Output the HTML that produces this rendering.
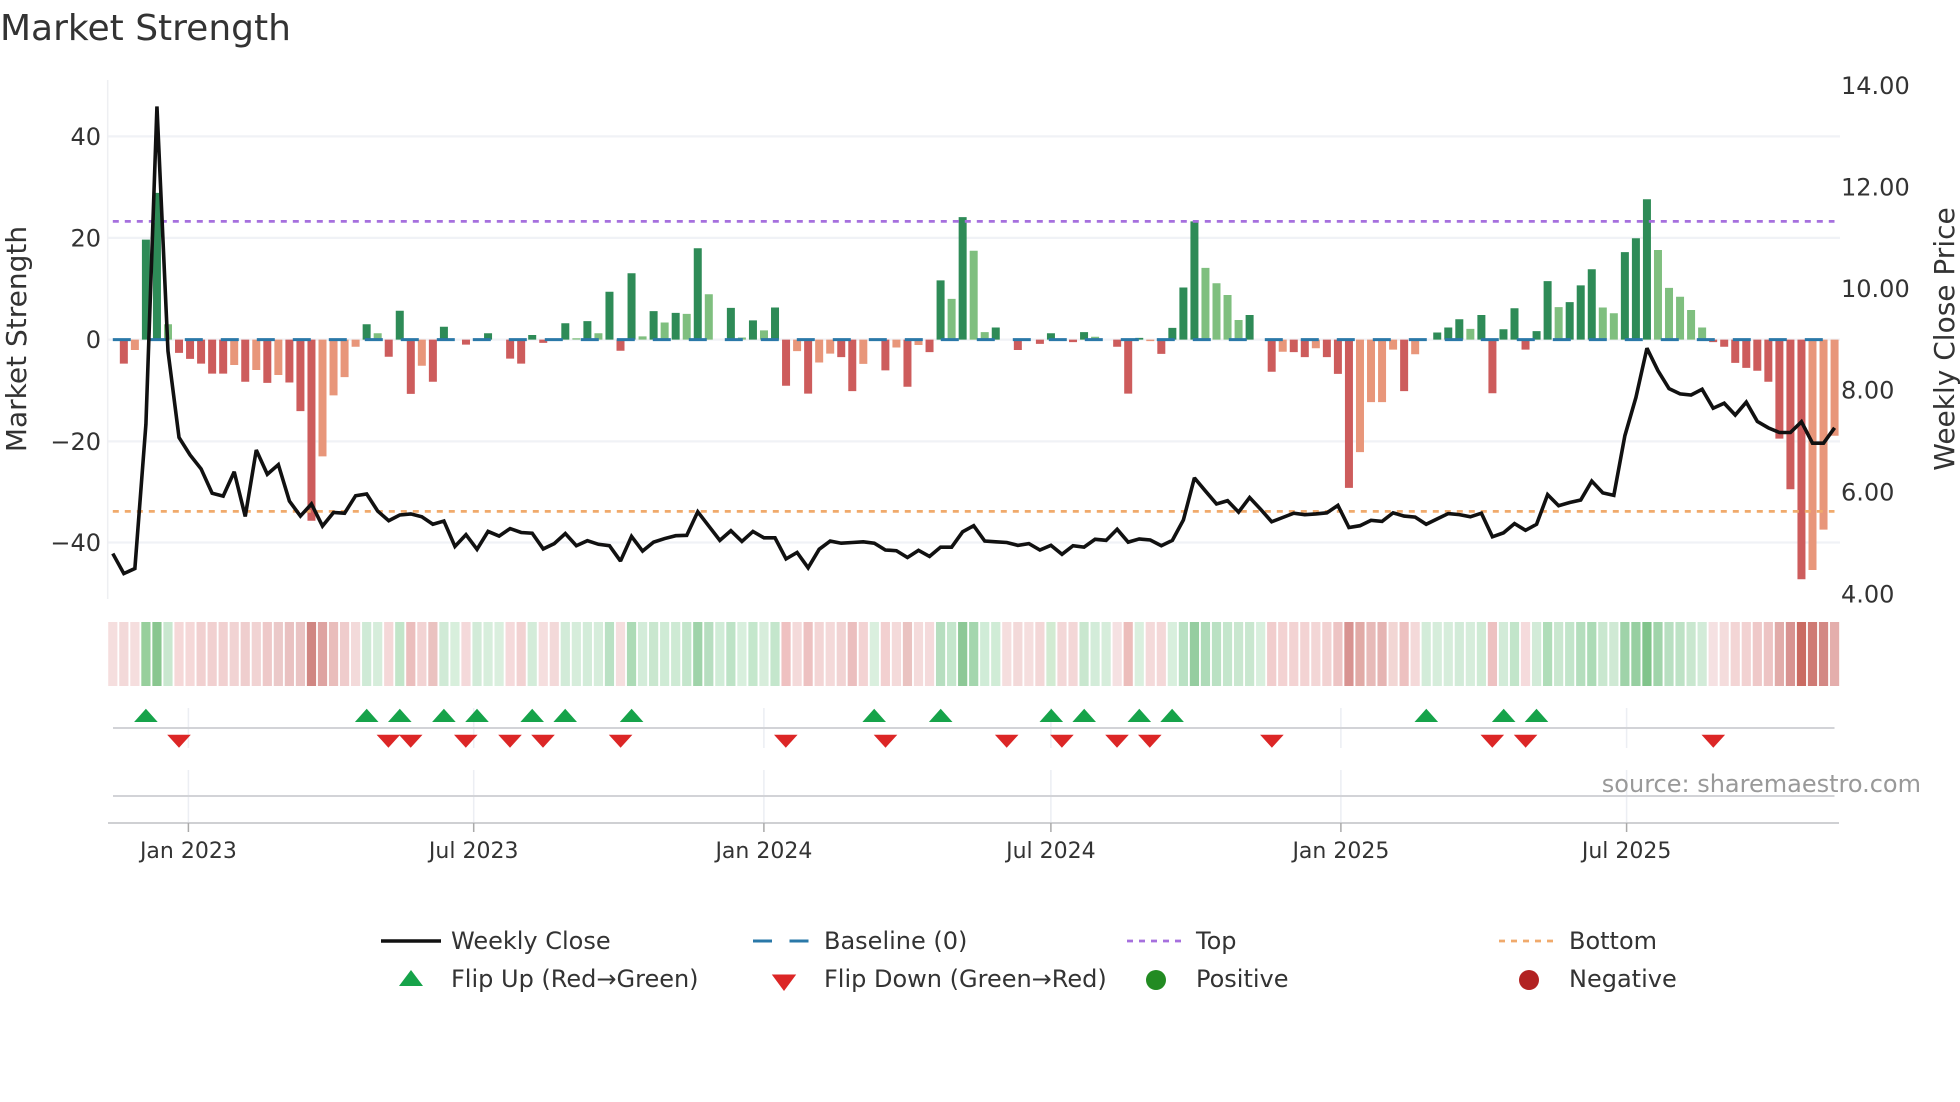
<!DOCTYPE html>
<html lang="en">
<head>
<meta charset="utf-8">
<title>Market Strength</title>
<style>
html,body{margin:0;padding:0;background:#fff;width:1960px;height:1102px;overflow:hidden}
svg{display:block}
text{font-family:"DejaVu Sans","Liberation Sans",sans-serif;fill:#333}
.u path,.h path{vector-effect:non-scaling-stroke;fill:none}
</style>
</head>
<body>
<svg width="1960" height="1102" viewBox="0 0 1960 1102" xmlns="http://www.w3.org/2000/svg">
<rect width="1960" height="1102" fill="#fff"/>

<text x="0" y="40" font-size="36">Market Strength</text>

<!-- grid -->
<g stroke="#f0f2f6" stroke-width="2.2">
<path d="M108 136.4H1840M108 237.9H1840M108 339.6H1840M108 441.4H1840M108 542.5H1840"/>
</g>
<path d="M107.7 80V599" stroke="#eeeff2" stroke-width="1.5"/>

<g font-size="24" text-anchor="end">
<text x="101" y="144.8">40</text>
<text x="101" y="246.3">20</text>
<text x="101" y="348">0</text>
<text x="101" y="449.8">−20</text>
<text x="101" y="550.9">−40</text>
</g>
<g font-size="24">
<text x="1841" y="94">14.00</text>
<text x="1841" y="195.5">12.00</text>
<text x="1841" y="297.1">10.00</text>
<text x="1841" y="398.7">8.00</text>
<text x="1841" y="500.3">6.00</text>
<text x="1841" y="602.300">4.00</text>
</g>
<text transform="translate(16 339) rotate(-90)" dy="10" font-size="28" text-anchor="middle">Market Strength</text>
<text transform="translate(1944 339) rotate(-90)" dy="10" font-size="28" text-anchor="middle">Weekly Close Price</text>

<!-- bars -->
<g class="u" transform="matrix(11.037 0 0 0.35714 112.8 60)" stroke-width="8">
<path stroke="#2e8b57" stroke-width="8" d="M3 783V503M4 783V372M23 783V740M26 783V702M30 783V747M34 783V765M38 783V770M41 783V737M43 783V731M45 783V649M47 783V597M49 783V703M51 783V708M53 783V527M56 783V694M58 783V729M60 783V693M75 783V617M77 783V440M80 783V749M85 783V765M88 783V762M93 783V778M96 783V750M97 783V637M98 783V452M103 783V714M120 783V763M121 783V749M122 783V726M124 783V714M126 783V754M127 783V695M129 783V759M130 783V619M132 783V678M133 783V631M134 783V586M137 783V538M138 783V499M139 783V390"/>
<path stroke="#7fbf7f" stroke-width="8" d="M5 783V740M24 783V765M42 783V779M44 783V765M48 783V774M50 783V735M52 783V711M54 783V656M57 783V777M59 783V757M76 783V669M78 783V534M79 783V762M89 783V775M99 783V582M100 783V625M101 783V658M102 783V728M123 783V753M131 783V692M135 783V693M136 783V709M140 783V532M141 783V638M142 783V663M143 783V700M144 783V749"/>
<path stroke="#cd5c5c" stroke-width="8" d="M1 783V850M6 783V820M7 783V837M8 783V850M9 783V878M10 783V878M12 783V901M14 783V904M16 783V903M17 783V983M18 783V1290M25 783V831M27 783V935M29 783V901M32 783V797M36 783V836M37 783V850M39 783V792M46 783V814M61 783V912M63 783V934M66 783V832M67 783V927M70 783V869M72 783V915M74 783V818M82 783V812M84 783V795M87 783V790M91 783V803M92 783V934M95 783V823M105 783V873M107 783V818M108 783V832M110 783V832M111 783V879M112 783V1198M117 783V927M125 783V933M128 783V811M145 783V790M146 783V803M147 783V848M148 783V862M149 783V870M150 783V901M151 783V1060M152 783V1202M153 783V1454"/>
<path stroke="#e8967a" stroke-width="8" d="M2 783V812M11 783V854M13 783V868M15 783V882M19 783V1110M20 783V939M21 783V888M22 783V803M28 783V856M62 783V815M64 783V847M65 783V822M68 783V851M71 783V805M73 783V798M94 783V787M106 783V817M109 783V807M113 783V1098M114 783V958M115 783V958M116 783V811M118 783V824M154 783V1428M155 783V1315M156 783V1052"/>
</g>

<!-- reference lines -->
<path d="M112.8 221.4H1834.500" stroke="#a670de" stroke-width="2.8" stroke-dasharray="6 6"/>
<path d="M112.8 511.4H1834.500" stroke="#f0aa6c" stroke-width="2.8" stroke-dasharray="6 6"/>
<path d="M112.8 339.6H1834.500" stroke="#2a78a8" stroke-width="3" stroke-dasharray="18 18"/>

<!-- weekly close -->
<g class="u" transform="matrix(11.037 0 0 0.35714 112.8 60)">
<path stroke="#111" stroke-width="3.6" stroke-linejoin="miter" stroke-miterlimit="2" d="M0 1382L1 1438L2 1424L3 1020L4 130L5 815L6 1057L7 1106L8 1145L9 1213L10 1221L11 1153L12 1278L13 1092L14 1160L15 1133L16 1235L17 1277L18 1243L19 1305L20 1267L21 1269L22 1220L23 1215L24 1263L25 1290L26 1274L27 1271L28 1279L29 1300L30 1291L31 1362L32 1329L33 1370L34 1320L35 1333L36 1312L37 1323L38 1325L39 1369L40 1354L41 1326L42 1360L43 1346L44 1356L45 1360L46 1403L47 1334L48 1375L49 1350L50 1340L51 1332L52 1331L53 1265L54 1305L55 1345L56 1318L57 1348L58 1320L59 1338L60 1338L61 1397L62 1379L63 1422L64 1370L65 1347L66 1353L67 1351L68 1349L69 1353L70 1372L71 1374L72 1393L73 1373L74 1390L75 1364L76 1364L77 1321L78 1304L79 1347L80 1349L81 1351L82 1359L83 1354L84 1372L85 1359L86 1384L87 1360L88 1364L89 1342L90 1345L91 1314L92 1350L93 1341L94 1344L95 1360L96 1345L97 1288L98 1170L99 1207L100 1243L101 1234L102 1266L103 1225L104 1258L105 1293L106 1281L107 1269L108 1273L109 1271L110 1268L111 1247L112 1309L113 1304L114 1289L115 1292L116 1268L117 1277L118 1280L119 1300L120 1285L121 1270L122 1273L123 1279L124 1269L125 1335L126 1324L127 1298L128 1317L129 1300L130 1217L131 1248L132 1239L133 1232L134 1179L135 1212L136 1219L137 1052L138 945L139 807L140 870L141 920L142 935L143 938L144 922L145 975L146 961L147 994L148 958L149 1012L150 1030L151 1043L152 1043L153 1013L154 1073L155 1073L156 1030"/>
</g>

<!-- heat strip -->
<g class="h" transform="matrix(11.037 0 0 64 112.8 622)" stroke-width="9.2" opacity="0.92">
<path stroke-width="9.2" stroke="#f5dcdc" d="M0 0V1"/><path stroke-width="9.2" stroke="#f3d6d6" d="M1 0V1"/><path stroke-width="9.2" stroke="#f5dcdc" d="M2 0V1"/><path stroke-width="9.2" stroke="#8fcb94" d="M3 0V1"/><path stroke-width="9.2" stroke="#7fc286" d="M4 0V1"/><path stroke-width="9.2" stroke="#c5e6cb" d="M5 0V1"/><path stroke-width="9.2" stroke="#f5d5d5" d="M6 0V1"/><path stroke-width="9.2" stroke="#f5d5d5" d="M7 0V1"/><path stroke-width="9.2" stroke="#f0cdcd" d="M8 0V1"/><path stroke-width="9.2" stroke="#f0cdcd" d="M9 0V1"/>
<path stroke-width="9.2" stroke="#f0cdcd" d="M10 0V1"/><path stroke-width="9.2" stroke="#f0d0d0" d="M11 0V1"/><path stroke-width="9.2" stroke="#eecaca" d="M12 0V1"/><path stroke-width="9.2" stroke="#f0d0d0" d="M13 0V1"/><path stroke-width="9.2" stroke="#edc5c5" d="M14 0V1"/><path stroke-width="9.2" stroke="#eac5c5" d="M15 0V1"/><path stroke-width="9.2" stroke="#e8bcbc" d="M16 0V1"/><path stroke-width="9.2" stroke="#e8bebe" d="M17 0V1"/><path stroke-width="9.2" stroke="#cd7c78" d="M18 0V1"/><path stroke-width="9.2" stroke="#dc9c9a" d="M19 0V1"/>
<path stroke-width="9.2" stroke="#e8b8b6" d="M20 0V1"/><path stroke-width="9.2" stroke="#eec8c8" d="M21 0V1"/><path stroke-width="9.2" stroke="#f3d7d7" d="M22 0V1"/><path stroke-width="9.2" stroke="#cce9d3" d="M23 0V1"/><path stroke-width="9.2" stroke="#d3ecd8" d="M24 0V1"/><path stroke-width="9.2" stroke="#f4d5d5" d="M25 0V1"/><path stroke-width="9.2" stroke="#bde3c5" d="M26 0V1"/><path stroke-width="9.2" stroke="#eab9b8" d="M27 0V1"/><path stroke-width="9.2" stroke="#f1d0d0" d="M28 0V1"/><path stroke-width="9.2" stroke="#e9bdbb" d="M29 0V1"/>
<path stroke-width="9.2" stroke="#cde9d3" d="M30 0V1"/><path stroke-width="9.2" stroke="#d5eeda" d="M31 0V1"/><path stroke-width="9.2" stroke="#f4d6d7" d="M32 0V1"/><path stroke-width="9.2" stroke="#cfead5" d="M33 0V1"/><path stroke-width="9.2" stroke="#d4edda" d="M34 0V1"/><path stroke-width="9.2" stroke="#d7eedc" d="M35 0V1"/><path stroke-width="9.2" stroke="#f5d7d8" d="M36 0V1"/><path stroke-width="9.2" stroke="#f1cfcf" d="M37 0V1"/><path stroke-width="9.2" stroke="#d0ebd6" d="M38 0V1"/><path stroke-width="9.2" stroke="#f5dcdc" d="M39 0V1"/>
<path stroke-width="9.2" stroke="#f3d6d6" d="M40 0V1"/><path stroke-width="9.2" stroke="#cfead5" d="M41 0V1"/><path stroke-width="9.2" stroke="#d3ecd9" d="M42 0V1"/><path stroke-width="9.2" stroke="#d0ebd6" d="M43 0V1"/><path stroke-width="9.2" stroke="#d3ecd9" d="M44 0V1"/><path stroke-width="9.2" stroke="#b5dfbf" d="M45 0V1"/><path stroke-width="9.2" stroke="#f5dcdc" d="M46 0V1"/><path stroke-width="9.2" stroke="#a5d8b0" d="M47 0V1"/><path stroke-width="9.2" stroke="#d0ebd6" d="M48 0V1"/><path stroke-width="9.2" stroke="#c5e6cc" d="M49 0V1"/>
<path stroke-width="9.2" stroke="#ccead2" d="M50 0V1"/><path stroke-width="9.2" stroke="#cae9d1" d="M51 0V1"/><path stroke-width="9.2" stroke="#c0e4c8" d="M52 0V1"/><path stroke-width="9.2" stroke="#97d0a2" d="M53 0V1"/><path stroke-width="9.2" stroke="#b1dcbb" d="M54 0V1"/><path stroke-width="9.2" stroke="#cdebd4" d="M55 0V1"/><path stroke-width="9.2" stroke="#b8e1c2" d="M56 0V1"/><path stroke-width="9.2" stroke="#d5eedb" d="M57 0V1"/><path stroke-width="9.2" stroke="#c0e5c8" d="M58 0V1"/><path stroke-width="9.2" stroke="#d4ecd9" d="M59 0V1"/>
<path stroke-width="9.2" stroke="#c0e4c8" d="M60 0V1"/><path stroke-width="9.2" stroke="#eebcbc" d="M61 0V1"/><path stroke-width="9.2" stroke="#f4d7d7" d="M62 0V1"/><path stroke-width="9.2" stroke="#ecbcbc" d="M63 0V1"/><path stroke-width="9.2" stroke="#f2d2d2" d="M64 0V1"/><path stroke-width="9.2" stroke="#f4d6d6" d="M65 0V1"/><path stroke-width="9.2" stroke="#f0d0d0" d="M66 0V1"/><path stroke-width="9.2" stroke="#eab9b9" d="M67 0V1"/><path stroke-width="9.2" stroke="#f2d0d0" d="M68 0V1"/><path stroke-width="9.2" stroke="#d7eedc" d="M69 0V1"/>
<path stroke-width="9.2" stroke="#f1cdcd" d="M70 0V1"/><path stroke-width="9.2" stroke="#f4d7d7" d="M71 0V1"/><path stroke-width="9.2" stroke="#e9bebc" d="M72 0V1"/><path stroke-width="9.2" stroke="#f4d9d9" d="M73 0V1"/><path stroke-width="9.2" stroke="#f4d7d9" d="M74 0V1"/><path stroke-width="9.2" stroke="#b0dcba" d="M75 0V1"/><path stroke-width="9.2" stroke="#c0e4c8" d="M76 0V1"/><path stroke-width="9.2" stroke="#84c48e" d="M77 0V1"/><path stroke-width="9.2" stroke="#9dd3a8" d="M78 0V1"/><path stroke-width="9.2" stroke="#cdebd4" d="M79 0V1"/>
<path stroke-width="9.2" stroke="#cdebd3" d="M80 0V1"/><path stroke-width="9.2" stroke="#f5dcdc" d="M81 0V1"/><path stroke-width="9.2" stroke="#f3d6d6" d="M82 0V1"/><path stroke-width="9.2" stroke="#f5dcdc" d="M83 0V1"/><path stroke-width="9.2" stroke="#f3d4d4" d="M84 0V1"/><path stroke-width="9.2" stroke="#cfeacf" d="M85 0V1"/><path stroke-width="9.2" stroke="#f3d4d4" d="M86 0V1"/><path stroke-width="9.2" stroke="#f3d4d4" d="M87 0V1"/><path stroke-width="9.2" stroke="#c5e6cc" d="M88 0V1"/><path stroke-width="9.2" stroke="#d0ebd6" d="M89 0V1"/>
<path stroke-width="9.2" stroke="#d3ecd9" d="M90 0V1"/><path stroke-width="9.2" stroke="#f5dfe0" d="M91 0V1"/><path stroke-width="9.2" stroke="#ebb8b6" d="M92 0V1"/><path stroke-width="9.2" stroke="#d7eedc" d="M93 0V1"/><path stroke-width="9.2" stroke="#f4d7d7" d="M94 0V1"/><path stroke-width="9.2" stroke="#f4d5d5" d="M95 0V1"/><path stroke-width="9.2" stroke="#d5eedb" d="M96 0V1"/><path stroke-width="9.2" stroke="#b4dfbe" d="M97 0V1"/><path stroke-width="9.2" stroke="#8dc998" d="M98 0V1"/><path stroke-width="9.2" stroke="#a8d9b3" d="M99 0V1"/>
<path stroke-width="9.2" stroke="#b5dfbe" d="M100 0V1"/><path stroke-width="9.2" stroke="#c0e4c8" d="M101 0V1"/><path stroke-width="9.2" stroke="#c5e6cc" d="M102 0V1"/><path stroke-width="9.2" stroke="#c5e6cc" d="M103 0V1"/><path stroke-width="9.2" stroke="#d5eedb" d="M104 0V1"/><path stroke-width="9.2" stroke="#f0c9c9" d="M105 0V1"/><path stroke-width="9.2" stroke="#f2cfcf" d="M106 0V1"/><path stroke-width="9.2" stroke="#f2d0d0" d="M107 0V1"/><path stroke-width="9.2" stroke="#f2d0d0" d="M108 0V1"/><path stroke-width="9.2" stroke="#f3d3d3" d="M109 0V1"/>
<path stroke-width="9.2" stroke="#f1cfcf" d="M110 0V1"/><path stroke-width="9.2" stroke="#ecc0c0" d="M111 0V1"/><path stroke-width="9.2" stroke="#d58a88" d="M112 0V1"/><path stroke-width="9.2" stroke="#dfa39f" d="M113 0V1"/><path stroke-width="9.2" stroke="#e6b5b3" d="M114 0V1"/><path stroke-width="9.2" stroke="#e3aeac" d="M115 0V1"/><path stroke-width="9.2" stroke="#f1d3d1" d="M116 0V1"/><path stroke-width="9.2" stroke="#ecbcbb" d="M117 0V1"/><path stroke-width="9.2" stroke="#f4d6d6" d="M118 0V1"/><path stroke-width="9.2" stroke="#d0ebd6" d="M119 0V1"/>
<path stroke-width="9.2" stroke="#d3ecd9" d="M120 0V1"/><path stroke-width="9.2" stroke="#d3ecd9" d="M121 0V1"/><path stroke-width="9.2" stroke="#cfead5" d="M122 0V1"/><path stroke-width="9.2" stroke="#d3ecd9" d="M123 0V1"/><path stroke-width="9.2" stroke="#ccead2" d="M124 0V1"/><path stroke-width="9.2" stroke="#ecbcbc" d="M125 0V1"/><path stroke-width="9.2" stroke="#cfead5" d="M126 0V1"/><path stroke-width="9.2" stroke="#bde3c6" d="M127 0V1"/><path stroke-width="9.2" stroke="#f5d9da" d="M128 0V1"/><path stroke-width="9.2" stroke="#cfead5" d="M129 0V1"/>
<path stroke-width="9.2" stroke="#aadbb4" d="M130 0V1"/><path stroke-width="9.2" stroke="#c5e6cc" d="M131 0V1"/><path stroke-width="9.2" stroke="#bde3c6" d="M132 0V1"/><path stroke-width="9.2" stroke="#aedcb8" d="M133 0V1"/><path stroke-width="9.2" stroke="#a5d8b0" d="M134 0V1"/><path stroke-width="9.2" stroke="#c5e6cc" d="M135 0V1"/><path stroke-width="9.2" stroke="#cbe8d1" d="M136 0V1"/><path stroke-width="9.2" stroke="#97d0a2" d="M137 0V1"/><path stroke-width="9.2" stroke="#8fcc9a" d="M138 0V1"/><path stroke-width="9.2" stroke="#77bf82" d="M139 0V1"/>
<path stroke-width="9.2" stroke="#98d1a3" d="M140 0V1"/><path stroke-width="9.2" stroke="#b2ddbc" d="M141 0V1"/><path stroke-width="9.2" stroke="#b8e0c1" d="M142 0V1"/><path stroke-width="9.2" stroke="#c5e6cc" d="M143 0V1"/><path stroke-width="9.2" stroke="#cfead5" d="M144 0V1"/><path stroke-width="9.2" stroke="#f5dfe0" d="M145 0V1"/><path stroke-width="9.2" stroke="#f4dada" d="M146 0V1"/><path stroke-width="9.2" stroke="#f2d2d2" d="M147 0V1"/><path stroke-width="9.2" stroke="#f1cfcf" d="M148 0V1"/><path stroke-width="9.2" stroke="#eec5c5" d="M149 0V1"/>
<path stroke-width="9.2" stroke="#ecc0c0" d="M150 0V1"/><path stroke-width="9.2" stroke="#dfa4a2" d="M151 0V1"/><path stroke-width="9.2" stroke="#d58a88" d="M152 0V1"/><path stroke-width="9.2" stroke="#c65f55" d="M153 0V1"/><path stroke-width="9.2" stroke="#cc6f69" d="M154 0V1"/><path stroke-width="9.2" stroke="#d07e7a" d="M155 0V1"/><path stroke-width="9.2" stroke="#e2a8a5" d="M156 0V1"/>
</g>

<!-- flip panels -->
<path d="M188.4 708V748M473.7 708V748M763.9 708V748M1050.9 708V748M1340.9 708V748M1626.6 708V748M188.4 770V823M473.7 770V823M763.9 770V823M1050.9 770V823M1340.9 770V823M1626.6 770V823" stroke="#eceef3" stroke-width="1.5"/>
<path d="M113 728H1834.500M113 796H1834.500" stroke="#d2d3d7" stroke-width="2"/>
<path d="M108 823H1839" stroke="#cfd0d3" stroke-width="2"/>
<path d="M188.4 823V832M473.7 823V832M763.9 823V832M1050.9 823V832M1340.9 823V832M1626.6 823V832" stroke="#aaa" stroke-width="1.5"/>

<g fill="#16a34a">
<path d="M145.9 708.7l11.8 13.3h-23.6z"/>
<path d="M366.7 708.7l11.8 13.3h-23.6z"/><path d="M399.8 708.7l11.8 13.3h-23.6z"/><path d="M443.9 708.7l11.8 13.3h-23.6z"/><path d="M477 708.7l11.8 13.3h-23.6z"/><path d="M532.2 708.7l11.8 13.3h-23.6z"/><path d="M565.2 708.7l11.8 13.3h-23.6z"/><path d="M631.6 708.7l11.8 13.3h-23.6z"/><path d="M874.2 708.7l11.8 13.3h-23.6z"/><path d="M940.7 708.7l11.8 13.3h-23.6z"/><path d="M1051.3 708.7l11.8 13.3h-23.6z"/><path d="M1084.2 708.7l11.8 13.3h-23.6z"/><path d="M1139.3 708.7l11.8 13.3h-23.6z"/><path d="M1172.1 708.7l11.8 13.3h-23.6z"/><path d="M1426.3 708.7l11.8 13.3h-23.6z"/><path d="M1503.7 708.7l11.8 13.3h-23.6z"/><path d="M1536.5 708.7l11.8 13.3h-23.6z"/>
</g>
<g fill="#dc2626">
<path d="M179 747.7l-11.8-13h23.6z"/><path d="M388.4 747.7l-11.8-13h23.6z"/><path d="M410.7 747.7l-11.8-13h23.6z"/><path d="M465.8 747.7l-11.8-13h23.6z"/><path d="M510 747.7l-11.8-13h23.6z"/><path d="M543 747.7l-11.8-13h23.6z"/><path d="M620.6 747.7l-11.8-13h23.6z"/><path d="M785.8 747.7l-11.8-13h23.6z"/><path d="M885.5 747.7l-11.8-13h23.6z"/><path d="M1006.7 747.7l-11.8-13h23.6z"/><path d="M1061.9 747.7l-11.8-13h23.6z"/><path d="M1117 747.7l-11.8-13h23.6z"/><path d="M1149.8 747.7l-11.8-13h23.6z"/><path d="M1271.9 747.7l-11.8-13h23.6z"/><path d="M1492.3 747.7l-11.8-13h23.6z"/><path d="M1525.6 747.7l-11.8-13h23.6z"/><path d="M1713.3 747.7l-11.8-13h23.6z"/>
</g>

<text x="1921" y="792" font-size="24" text-anchor="end" style="fill:#999">source: sharemaestro.com</text>

<g font-size="22" text-anchor="middle">
<text x="188.4" y="858">Jan 2023</text>
<text x="473.7" y="858">Jul 2023</text>
<text x="763.9" y="858">Jan 2024</text>
<text x="1050.9" y="858">Jul 2024</text>
<text x="1340.9" y="858">Jan 2025</text>
<text x="1626.6" y="858">Jul 2025</text>
</g>

<!-- legend -->
<path d="M381 941H441" stroke="#111" stroke-width="3.6"/>
<path d="M753 941H772M789.500 941H808.500" stroke="#2a78a8" stroke-width="3"/>
<path d="M1127 941H1182" stroke="#a670de" stroke-width="2.8" stroke-dasharray="6 6"/>
<path d="M1499 941H1554" stroke="#f0aa6c" stroke-width="2.8" stroke-dasharray="6 6"/>
<path d="M411 970l12 16h-24z" fill="#16a34a"/>
<path d="M784 991l-12.200-16.500h24.400z" fill="#dc2626"/>
<circle cx="1156" cy="980" r="10" fill="#228b22"/>
<circle cx="1529" cy="980" r="10" fill="#b22222"/>
<g font-size="24">
<text x="451" y="949">Weekly Close</text>
<text x="824" y="949">Baseline (0)</text>
<text x="1196" y="949">Top</text>
<text x="1569" y="949">Bottom</text>
<text x="451" y="987">Flip Up (Red→Green)</text>
<text x="824" y="987">Flip Down (Green→Red)</text>
<text x="1196" y="987">Positive</text>
<text x="1569" y="987">Negative</text>
</g>
</svg>
</body>
</html>
